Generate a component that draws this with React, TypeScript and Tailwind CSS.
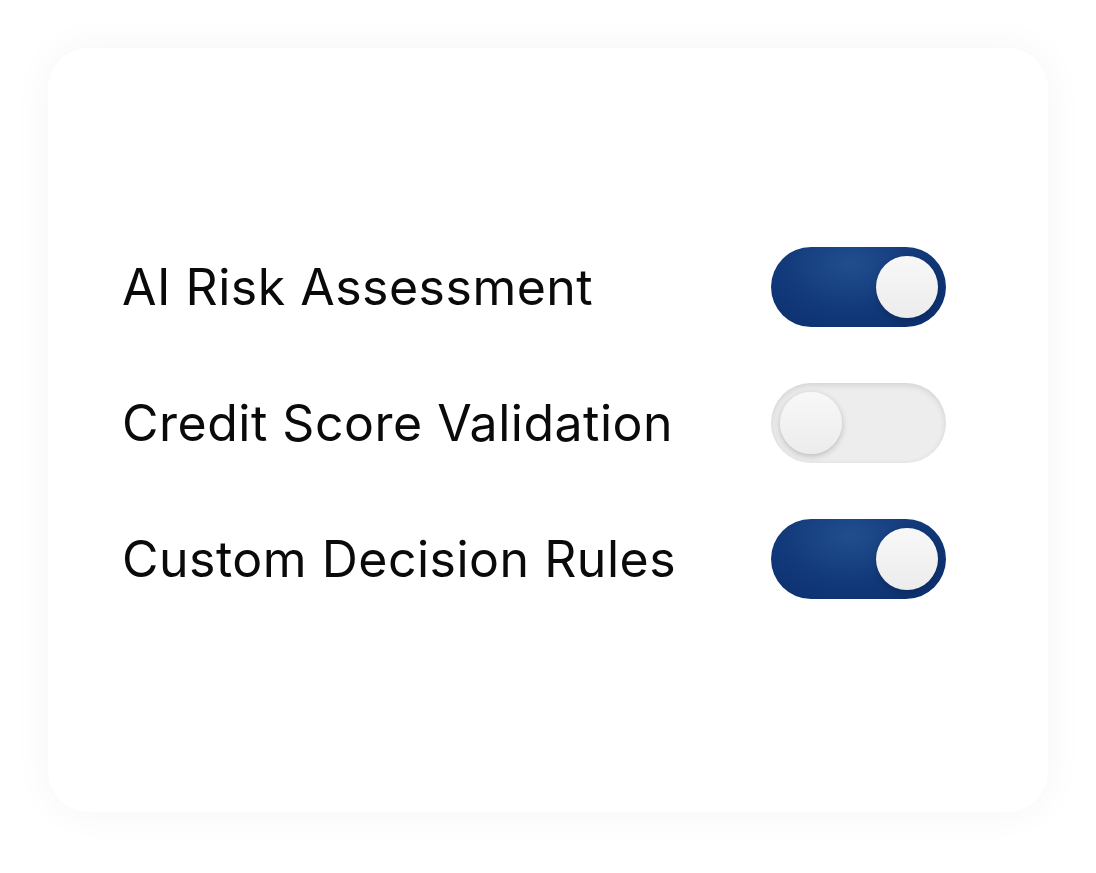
import React, { useState } from 'react';

const ROWS = [
  { label: 'AI Risk Assessment', on: true },
  { label: 'Credit Score Validation', on: false },
  { label: 'Custom Decision Rules', on: true },
];

const Toggle: React.FC<{ on: boolean; onClick: () => void }> = ({ on, onClick }) => (
  <button
    type="button"
    onClick={onClick}
    className={
      on
        ? 'flex h-[80px] w-[175px] items-center justify-end rounded-full bg-[radial-gradient(ellipse_at_45%_20%,#214e8e_0%,#113879_55%,#0a2d6b_100%)] pr-[8px]'
        : 'flex h-[80px] w-[175px] items-center justify-start rounded-full bg-[#ededed] pl-[9px] shadow-[inset_0_2px_6px_rgba(0,0,0,0.12)]'
    }
  >
    <span className="block h-[62px] w-[62px] rounded-full bg-[linear-gradient(180deg,#f8f8f8_0%,#ececec_100%)] shadow-[0_2px_6px_rgba(0,0,0,0.22)]" />
  </button>
);

export default function App() {
  const [rows, setRows] = useState(ROWS);
  const flip = (i: number) => setRows((r) => r.map((x, j) => (j === i ? { ...x, on: !x.on } : x)));

  return (
    <div className="h-[873px] w-[1096px] bg-white pl-[48px] pt-[48px]" style={{ fontFamily: 'Inter, "Noto Sans", sans-serif' }}>
      <div className="flex h-[764px] w-[1000px] flex-col justify-start rounded-[40px] bg-white pl-[74px] pr-[102px] pt-[199px] shadow-[0_0_40px_rgba(0,0,0,0.045)]">
        <div className="flex flex-col gap-[56px]">
          {rows.map((row, i) => (
            <div key={row.label} className="flex items-center justify-between">
              <span className="text-[50px] leading-none tracking-[0.5px] text-[#0a0a0a]">{row.label}</span>
              <Toggle on={row.on} onClick={() => flip(i)} />
            </div>
          ))}
        </div>
      </div>
    </div>
  );
}
